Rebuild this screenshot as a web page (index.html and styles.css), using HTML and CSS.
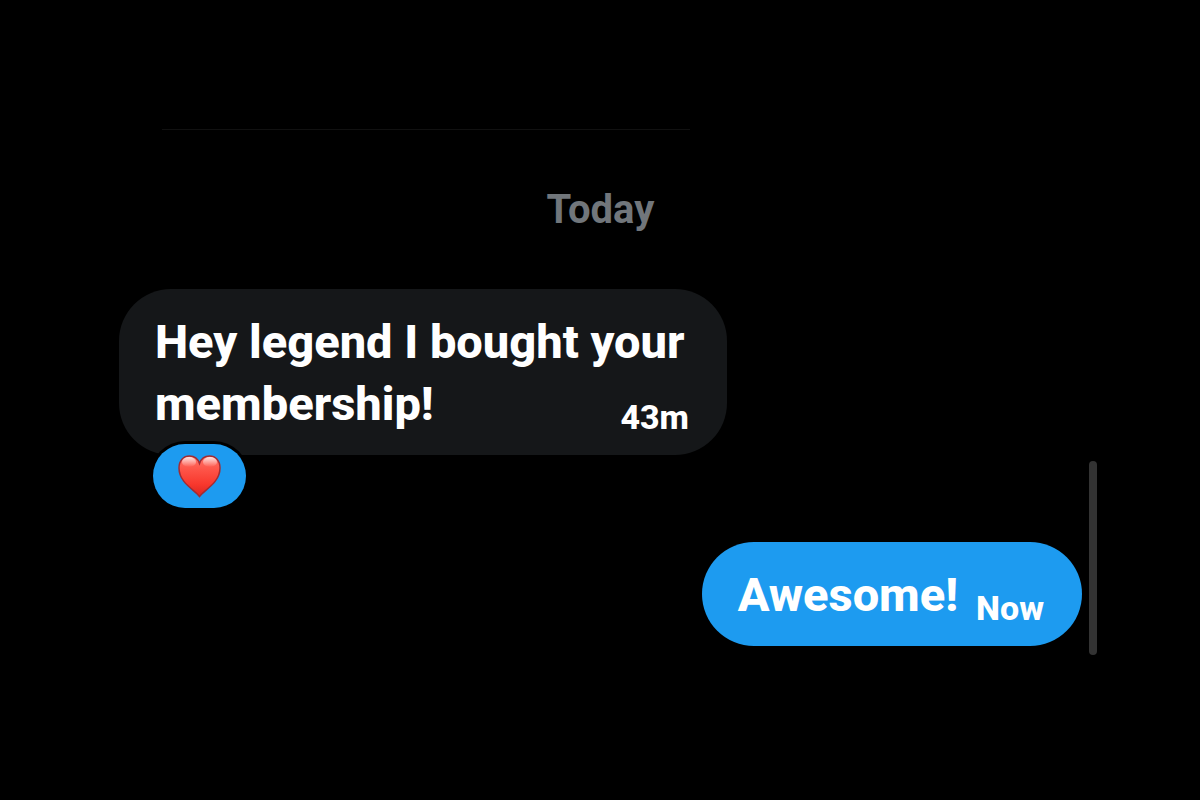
FILE: index.html
```html
<!DOCTYPE html>
<html lang="en">
  <head>
    <meta charset="UTF-8" />
    <meta name="viewport" content="width=device-width, initial-scale=1.0" />
    <title>Messages</title>
    <link rel="stylesheet" href="styles.css">
  </head>

  <body>
    <main class="chat">
      <hr class="divider" />
      <h2 class="day">Today</h2>

      <div class="message received">
        <p class="text">
          Hey legend I bought your membership!
          <time class="time">43m</time>
        </p>
        <button class="reaction" type="button" aria-label="Heart reaction">
          <svg class="heart" viewBox="0 0 44 44" aria-hidden="true">
            <defs>
              <linearGradient id="heart-fill" x1="0" y1="0" x2="0" y2="1">
                <stop offset="0" stop-color="#ff7468" />
                <stop offset="0.35" stop-color="#fd5347" />
                <stop offset="0.7" stop-color="#f8382d" />
                <stop offset="1" stop-color="#d92520" />
              </linearGradient>
              <linearGradient id="heart-shine" x1="0" y1="0" x2="0" y2="1">
                <stop offset="0" stop-color="#fff" stop-opacity="0.8" />
                <stop offset="1" stop-color="#fff" stop-opacity="0" />
              </linearGradient>
            </defs>
            <path
              d="M21.500 42.500C17 36 1 29 1 14C1 6.500 5.500 2 11.500 2C16.500 2 20 5 21.500 9.500C23 5 26.500 2 31.500 2C37.500 2 42 6.500 42 14C42 29 26 36 21.500 42.500Z"
              fill="url(#heart-fill)"
              stroke="#a02c34"
              stroke-width="1.500"
            />
            <ellipse cx="11" cy="8" rx="7" ry="5" fill="url(#heart-shine)" />
            <ellipse cx="32" cy="8" rx="7" ry="5" fill="url(#heart-shine)" />
          </svg>
        </button>
      </div>

      <div class="message sent">
        <p class="text">
          Awesome!
          <time class="time">Now</time>
        </p>
      </div>

      <div class="scroll-thumb"></div>
    </main>
  </body>
</html>
```

FILE: styles.css
```css
* {
  box-sizing: border-box;
  margin: 0;
  padding: 0;
}

body {
  background-color: #000;
  color: #fff;
  font-family: Roboto, "Liberation Sans", sans-serif;
  font-weight: 800;
}

.chat {
  display: flex;
  flex-direction: column;
  min-height: 100vh;
  padding: 129px 118px 0 119px;
  position: relative;
}

.divider {
  border: 0;
  border-top: 1px solid #111;
  margin-left: 43px;
  max-width: 528px;
}

.day {
  color: #71767b;
  font-size: 40px;
  line-height: 50px;
  margin: 55px 0 54px;
  text-align: center;
}

.message {
  border-radius: 52px;
  max-width: 608px;
  padding: 22px 38px 20px 36px;
  position: relative;
}

.received {
  align-self: flex-start;
  background-color: #151719;
  margin-bottom: 87px;
}

.sent {
  align-self: flex-end;
  background-color: #1d9bf0;
}

.text {
  font-size: 47px;
  line-height: 62px;
}

/* sits at the end of the last line */
.time {
  float: right;
  font-size: 34px;
  line-height: 36px;
  margin: 26px 0 0 18px;
}

.reaction {
  align-items: center;
  background-color: #1d9bf0;
  border: 0;
  border-radius: 32px;
  bottom: -53px;
  box-shadow: 0 0 0 3px #000;
  cursor: pointer;
  display: flex;
  height: 64px;
  justify-content: center;
  left: 34px;
  position: absolute;
  width: 93px;
}

.heart {
  height: 44px;
  width: 44px;
}

.scroll-thumb {
  background-color: #333;
  border-radius: 4px;
  height: 194px;
  position: absolute;
  right: 103px;
  top: 461px;
  width: 8px;
}
```
